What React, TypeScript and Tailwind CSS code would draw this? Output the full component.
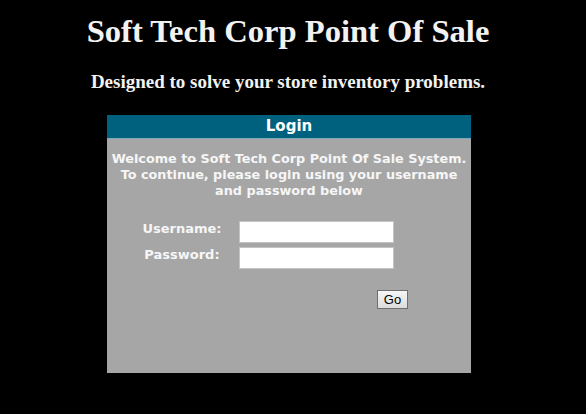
export default function App() {
  return (
    <div className="min-h-screen bg-black pr-[10px] font-['Liberation_Serif','Times_New_Roman',serif] text-[#f2f2f2] overflow-hidden">
      {/* heading */}
      <h1 className="pt-[13px] text-center text-[32.6px] font-bold leading-[37px]">
        Soft Tech Corp Point Of Sale
      </h1>
      <h2 className="mt-[21px] text-center text-[19px] font-bold leading-[22px]">
        Designed to solve your store inventory problems.
      </h2>

      {/* login box */}
      <div className="mx-auto mt-[22px] w-[364px] translate-x-[1px] font-['DejaVu_Sans','Verdana',sans-serif]">
        <div className="h-[24px] bg-[#00617f] text-center text-[15px] font-bold leading-[23px] text-white border-b border-[#7fa8b8]">
          Login
        </div>
        <div className="h-[234px] bg-[#a6a6a6] pt-[12px]">
          <p className="text-center text-[12.8px] font-bold leading-[16px] text-[#f6f6f6]">
            Welcome to Soft Tech Corp Point Of Sale System.
            <br />
            To continue, please login using your username
            <br />
            and password below
          </p>

          <div className="mt-[22px] space-y-[4px] pl-[18px]">
            <div className="flex items-start">
              <label className="w-[114px] text-center text-[13px] font-bold leading-[15px] text-[#f6f6f6]">
                Username:
              </label>
              <input
                type="text"
                className="h-[22px] w-[155px] border border-[#c4c4c4] bg-white px-1 text-[13px] text-black outline-none"
              />
            </div>
            <div className="flex items-start">
              <label className="w-[114px] text-center text-[13px] font-bold leading-[15px] text-[#f6f6f6]">
                Password:
              </label>
              <input
                type="password"
                className="h-[22px] w-[155px] border border-[#c4c4c4] bg-white px-1 text-[13px] text-black outline-none"
              />
            </div>
          </div>

          <button className="ml-[270px] mt-[21px] h-[19px] w-[31px] border border-[#6f6f6f] bg-gradient-to-b from-[#f6f6f6] to-[#dcdcdc] font-['Liberation_Sans',Arial,sans-serif] text-[13px] leading-[17px] text-black">
            Go
          </button>
        </div>
      </div>
    </div>
  );
}
